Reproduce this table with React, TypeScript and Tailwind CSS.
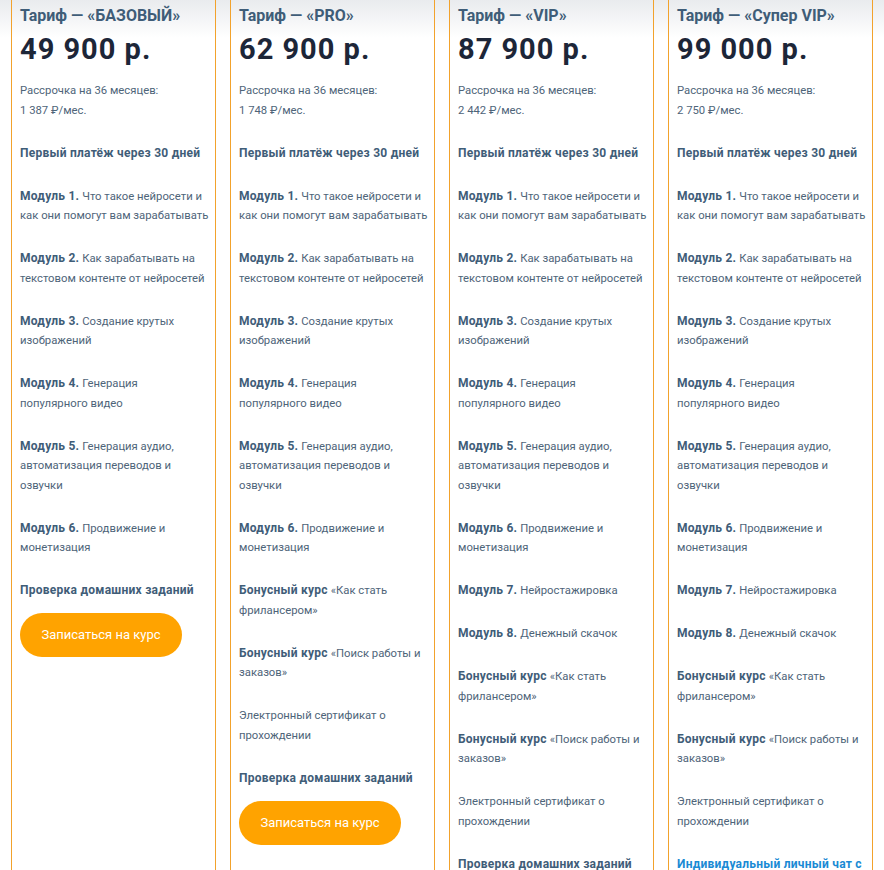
import React from "react";

type Item = { bold?: string; text?: string[]; kind?: "bold" | "plain" | "blue" };

const common: Item[] = [
  { kind: "bold", bold: "Первый платёж через 30 дней" },
  { bold: "Модуль 1.", text: ["Что такое нейросети и", "как они помогут вам зарабатывать"] },
  { bold: "Модуль 2.", text: ["Как зарабатывать на", "текстовом контенте от нейросетей"] },
  { bold: "Модуль 3.", text: ["Создание крутых", "изображений"] },
  { bold: "Модуль 4.", text: ["Генерация", "популярного видео"] },
  { bold: "Модуль 5.", text: ["Генерация аудио,", "автоматизация переводов и", "озвучки"] },
  { bold: "Модуль 6.", text: ["Продвижение и", "монетизация"] },
];

const extra: Item[] = [
  { bold: "Модуль 7.", text: ["Нейростажировка"] },
  { bold: "Модуль 8.", text: ["Денежный скачок"] },
];

const bonus: Item[] = [
  { bold: "Бонусный курс", text: ["«Как стать", "фрилансером»"] },
  { bold: "Бонусный курс", text: ["«Поиск работы и", "заказов»"] },
  { kind: "plain", text: ["Электронный сертификат о", "прохождении"] },
];

const homework: Item = { kind: "bold", bold: "Проверка домашних заданий" };

const plans = [
  { name: "«БАЗОВЫЙ»", price: "49 900 р.", month: "1 387 ₽/мес.", items: [...common, homework] },
  { name: "«PRO»", price: "62 900 р.", month: "1 748 ₽/мес.", items: [...common, ...bonus, homework] },
  { name: "«VIP»", price: "87 900 р.", month: "2 442 ₽/мес.", items: [...common, ...extra, ...bonus, homework] },
  {
    name: "«Супер VIP»",
    price: "99 000 р.",
    month: "2 750 ₽/мес.",
    items: [
      ...common,
      ...extra,
      ...bonus,
      { kind: "blue", bold: "Индивидуальный личный чат с", text: ["куратором"] } as Item,
      homework,
    ],
  },
];

function Lines({ text }: { text?: string[] }) {
  return (
    <>
      {text?.map((t, i) => (
        <React.Fragment key={i}>
          {i > 0 && <br />}
          {t}
        </React.Fragment>
      ))}
    </>
  );
}

function Line({ item }: { item: Item }) {
  if (item.kind === "bold") {
    return <p className="mb-[23.5px] text-[12px] font-bold tracking-[0.25px] text-[#3f5d78]">{item.bold}</p>;
  }
  if (item.kind === "blue") {
    return (
      <p className="mb-[23.5px] text-[12px] font-bold tracking-[0.25px] text-[#1a8ad4]">
        {item.bold}
        <br />
        {item.text?.[0]}
      </p>
    );
  }
  if (item.kind === "plain") {
    return (
      <p className="mb-[23.5px]">
        <Lines text={item.text} />
      </p>
    );
  }
  return (
    <p className="mb-[23.5px]">
      <span className="text-[12px] font-bold tracking-[0.25px] text-[#3f5d78]">{item.bold}</span>{" "}
      <Lines text={item.text} />
    </p>
  );
}

export default function App() {
  return (
    <main className="min-h-screen bg-[linear-gradient(to_bottom,#e9ebee,#ffffff_38px)] font-['Roboto',sans-serif]">
      <div className="grid grid-cols-4 gap-[14px] px-[11px]">
        {plans.map((plan) => (
          <div key={plan.name} className="border-x border-[#f2a22c] pl-2 pr-1 pt-[6px] pb-10">
            <h3 className="text-[16px] leading-[20px] font-bold text-[#3f5d78] whitespace-nowrap">
              Тариф — {plan.name}
            </h3>
            <div className="mt-[6px] text-[29px] leading-[34px] font-bold text-[#1d2638] tracking-[1px]">
              {plan.price}
            </div>
            <div className="mt-[15px] text-[11.3px] leading-[19.5px] text-[#4e6479] whitespace-nowrap">
              <p className="mb-[23.5px]">
                Рассрочка на 36 месяцев:
                <br />
                {plan.month}
              </p>
              {plan.items.map((item, i) => (
                <Line key={i} item={item} />
              ))}
            </div>
            <button className="-mt-[11px] block h-[44px] w-[162px] rounded-full bg-[#ffa300] text-[13px] font-normal text-white">
              Записаться на курс
            </button>
          </div>
        ))}
      </div>
    </main>
  );
}
